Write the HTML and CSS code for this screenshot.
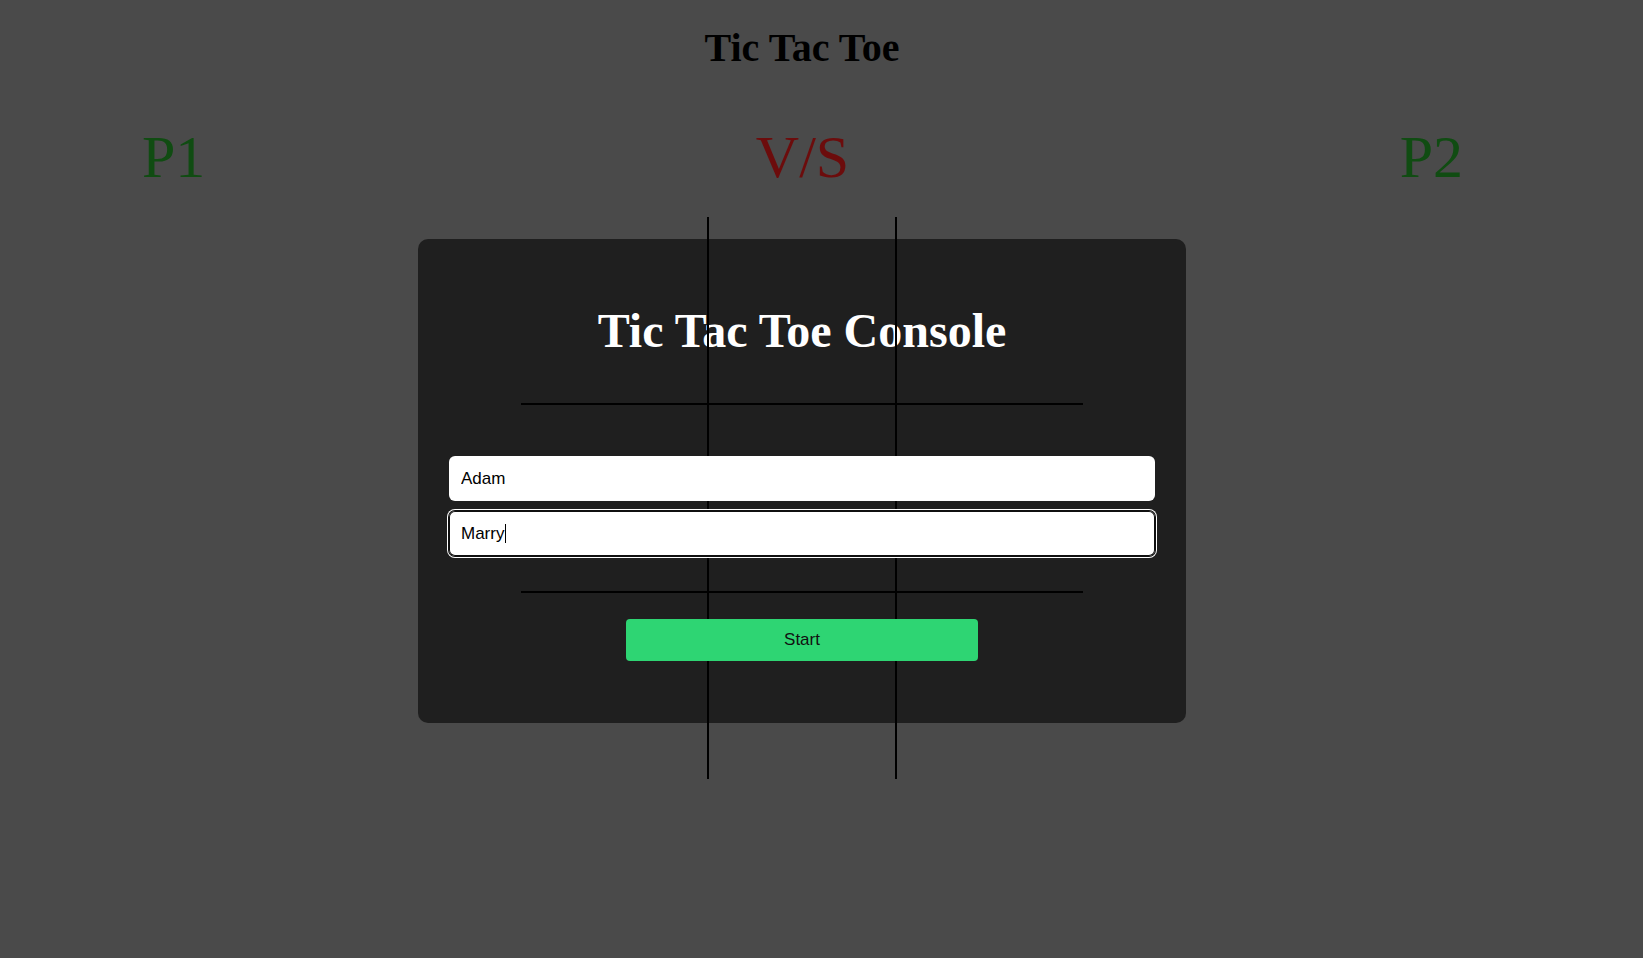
FILE: index.html
```html
<!DOCTYPE html>
<html lang="en">
<head>
<meta charset="utf-8">
<title>Tic Tac Toe</title>
<link rel="stylesheet" href="styles.css">
</head>
<body>
<div class="page">
  <h1 class="title">Tic Tac Toe</h1>
  <div class="players">
    <span class="player">P1</span>
    <span class="vs">V/S</span>
    <span class="player">P2</span>
  </div>
  <main class="stage">
    <div class="board">
      <div class="cell"></div><div class="cell"></div><div class="cell"></div>
      <div class="cell"></div><div class="cell"></div><div class="cell"></div>
      <div class="cell"></div><div class="cell"></div><div class="cell"></div>
    </div>
    <div class="modal">
      <h2 class="modal-title">Tic Tac Toe Console</h2>
      <form class="modal-form" onsubmit="return false">
        <input class="name-input" type="text" value="Adam">
        <div class="field">
          <input class="name-input is-active" id="p2" type="text" value="Marry" autofocus>
          <span class="caret"></span>
        </div>
        <button class="start-btn" type="button">Start</button>
      </form>
    </div>
  </main>
</div>
<script src="script.js"></script>
</body>
</html>
```
FILE: styles.css
```css
* { box-sizing: border-box; }
html, body { margin: 0; padding: 0; }
body {
  background: #4a4a4a;
  font-family: "Liberation Serif", "Times New Roman", serif;
  width: 1643px;
  height: 958px;
  overflow: hidden;
}
.page { width: 1604px; }
.title {
  margin: 28px 0 0;
  font: bold 40px/1 "Liberation Serif", serif;
  color: #000;
  text-align: center;
}
.players {
  display: flex;
  justify-content: space-between;
  margin-top: 59px;
  padding: 0 141px 0 142px;
  font: 60px/1 "Liberation Serif", serif;
}
.player { color: #104c12; }
.vs { color: #6c0c0c; }
.stage {
  position: relative;
  margin-top: 30px;
}
.board {
  position: relative;
  z-index: 1;
  width: 562px;
  height: 562px;
  margin: 0 auto;
  display: grid;
  grid-template-columns: 188px 188px 1fr;
  grid-template-rows: 188px 188px 1fr;
}
.cell { border: 0 solid #000; }
.cell:nth-child(3n+1), .cell:nth-child(3n+2) { border-right-width: 2px; }
.cell:nth-child(-n+6) { border-bottom-width: 2px; }
.modal {
  position: absolute;
  top: 22px;
  left: 50%;
  margin-left: -384px;
  width: 768px;
  height: 484px;
  background: #1f1f1f;
  border-radius: 10px;
  padding: 68px 31px 0;
}
.modal-title {
  margin: 0;
  font: bold 48px/1 "Liberation Serif", serif;
  color: #fff;
  text-align: center;
}
.modal-form {
  display: flex;
  flex-direction: column;
  align-items: center;
  gap: 10px;
  margin-top: 101px;
}
.field {
  position: relative;
  z-index: 2;
  width: 100%;
}
.name-input {
  position: relative;
  z-index: 2;
  display: block;
  width: 100%;
  height: 45px;
  border: none;
  border-radius: 6px;
  background: #fff;
  padding: 0 12px;
  font: 17px "Liberation Sans", Arial, sans-serif;
  color: #000;
  outline: none;
  caret-color: transparent;
}
.name-input.is-active {
  box-shadow: 0 0 0 1px #101010, 0 0 0 2px #fff, inset 0 0 0 1px #101010;
}
.caret {
  position: absolute;
  z-index: 3;
  left: 56px;
  top: 13px;
  width: 1px;
  height: 19px;
  background: #000;
}
.start-btn {
  position: relative;
  z-index: 2;
  width: 352px;
  height: 42px;
  margin-top: 53px;
  border: none;
  border-radius: 4px;
  background: #2ed573;
  color: #111;
  font: 17px "Liberation Sans", Arial, sans-serif;
  cursor: pointer;
}
```
FILE: script.js
```js
var el = document.getElementById('p2');
el.focus();
el.setSelectionRange(el.value.length, el.value.length);
```
